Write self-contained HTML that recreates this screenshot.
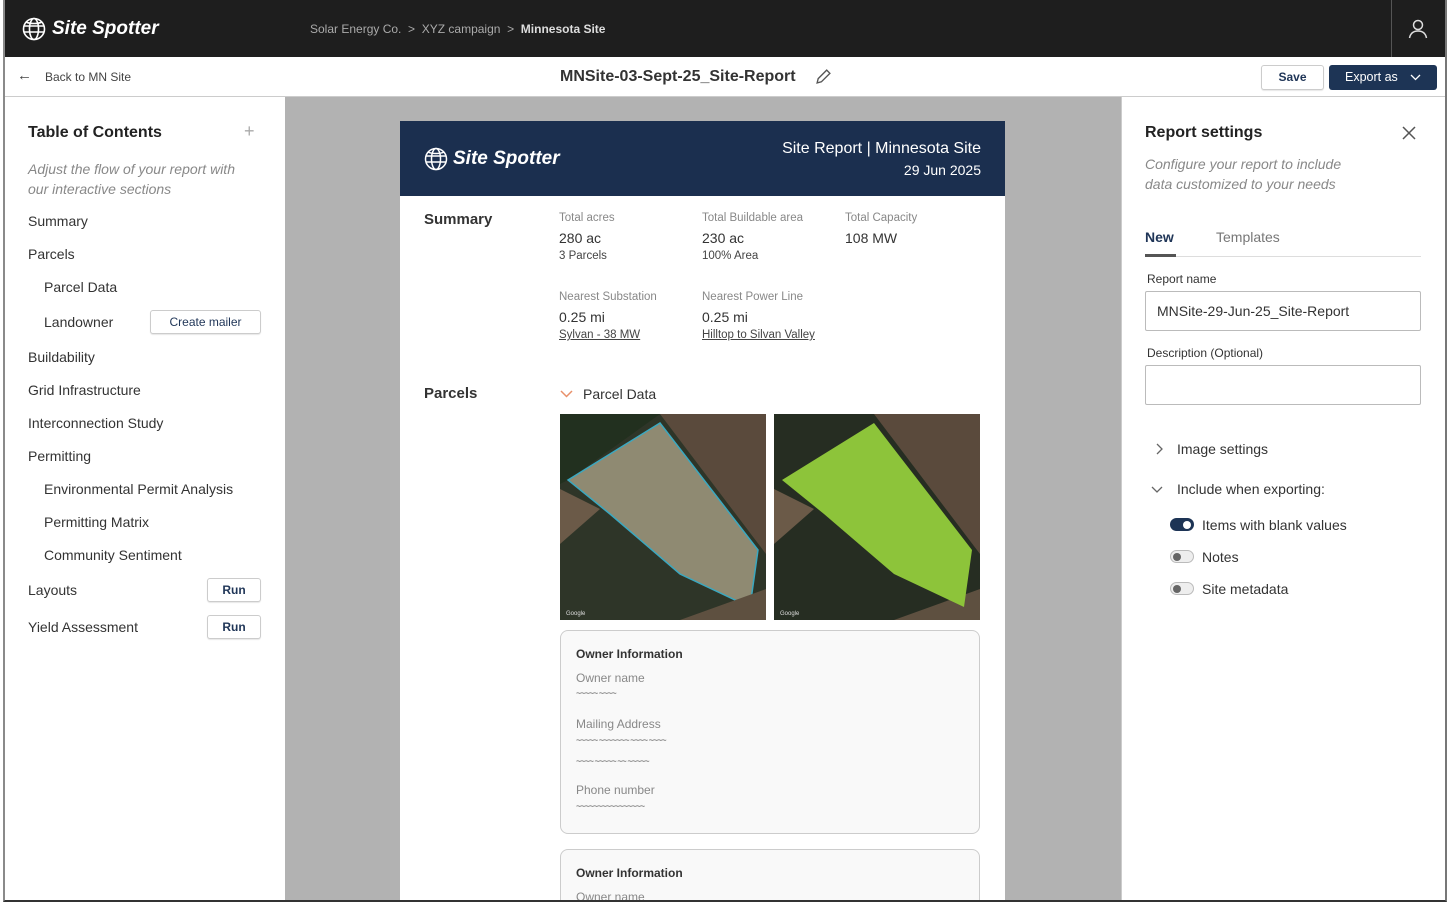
<!DOCTYPE html>
<html><head><meta charset="utf-8"><style>
*{box-sizing:border-box;margin:0;padding:0}
html,body{width:1450px;height:902px;overflow:hidden}
body{background:#fff;font-family:"Liberation Sans",Arial,sans-serif;color:#222;position:relative}
.a{position:absolute}
.frame{left:3px;top:0;width:1444px;height:902px;border-left:2px solid #8a8a8a;border-right:2px solid #777;border-bottom:2px solid #333;overflow:hidden}
.top{left:0;top:0;width:1440px;height:57px;background:#1e1e1e}
.logo{font-style:italic;font-weight:bold;color:#fff}
.sub{left:0;top:57px;width:1440px;height:40px;background:#fff;border-bottom:1px solid #ccc}
.left{left:0;top:97px;width:280px;height:805px;background:#fff}
.canvas{left:280px;top:97px;width:836px;height:805px;background:#b2b2b2;overflow:hidden}
.right{left:1116px;top:97px;width:325px;height:805px;background:#fff;border-left:1px solid #ccc}
.toc{font-size:14px;color:#333}
.btn{border:1px solid #ccc;border-radius:3px;background:#fff;color:#1f3557;font-size:12px;font-weight:bold;text-align:center;box-shadow:0 1px 1px rgba(0,0,0,.1)}
.lbl{font-size:11.5px;color:#888}
.val{font-size:14px;color:#333}
.sm{font-size:11.5px;color:#444}
.card{border:1px solid #ccc;border-radius:8px;background:#f9f9f9}
.squig{font-size:9px;color:#555;letter-spacing:-1px}
.tog{width:24px;height:13px;border-radius:7px;border:1px solid #bbb;background:#eee}
.tog i{position:absolute;left:2px;top:2px;width:8px;height:8px;border-radius:50%;background:#666}
</style></head><body>
<div class="a frame">
 <div class="a top">
  <svg class="a" style="left:17px;top:17px" width="24" height="24" viewBox="0 0 24 24" fill="none" stroke="#fff" stroke-width="1.6"><circle cx="12" cy="12" r="10.5"/><ellipse cx="12" cy="12" rx="4.5" ry="10.5"/><path d="M2 9h20M2 15h20M4 5c4 2 12 2 16 0"/></svg>
  <div class="a logo" style="left:47px;top:18px;font-size:19px">Site Spotter</div>
  <div class="a" style="left:305px;top:22px;font-size:12px;color:#aaa">Solar Energy Co. &nbsp;&gt;&nbsp; XYZ campaign &nbsp;&gt;&nbsp; <b style="color:#ddd">Minnesota Site</b></div>
  <div class="a" style="left:1386px;top:0;width:1px;height:57px;background:#555"></div>
  <svg class="a" style="left:1402px;top:18px" width="22" height="22" viewBox="0 0 22 22" fill="none" stroke="#ddd" stroke-width="1.5"><circle cx="11" cy="7" r="4.5"/><path d="M2.5 20c1-5 4.5-7 8.5-7s7.5 2 8.5 7"/></svg>
 </div>
 <div class="a sub">
  <div class="a" style="left:12px;top:10px;font-size:15px;color:#444">&#8592;</div>
  <div class="a" style="left:40px;top:13px;font-size:12px;color:#444">Back to MN Site</div>
  <div class="a" style="left:555px;top:11px;font-size:16px;font-weight:bold;color:#333">MNSite-03-Sept-25_Site-Report</div>
  <svg class="a" style="left:810px;top:11px" width="17" height="17" viewBox="0 0 16 16" fill="none" stroke="#555" stroke-width="1.3"><path d="M2 14l1-4 8-8 3 3-8 8z"/></svg>
  <div class="a btn" style="left:1256px;top:8px;width:63px;height:25px;line-height:23px">Save</div>
  <div class="a" style="left:1324px;top:8px;width:108px;height:25px;line-height:25px;background:#1d3455;border-radius:3px;color:#fff;font-size:12.5px;padding-left:16px">Export as</div>
  <svg class="a" style="left:1405px;top:16px" width="11" height="8" viewBox="0 0 11 8" fill="none" stroke="#fff" stroke-width="1.3"><path d="M1 2l4.5 4.5L10 2"/></svg>
 </div>
 <div class="a left">
  <div class="a" style="left:23px;top:27px;font-size:16px;font-weight:bold;color:#222">Table of Contents</div>
  <div class="a" style="left:239px;top:24px;font-size:18px;color:#aaa">+</div>
  <div class="a" style="left:23px;top:62px;font-size:14px;font-style:italic;color:#888;line-height:20px">Adjust the flow of your report with<br>our interactive sections</div>
  <div class="a toc" style="left:23px;top:116px">Summary</div>
  <div class="a toc" style="left:23px;top:149px">Parcels</div>
  <div class="a toc" style="left:39px;top:182px">Parcel Data</div>
  <div class="a toc" style="left:39px;top:217px">Landowner</div>
  <div class="a btn" style="left:145px;top:213px;width:111px;height:24px;line-height:22px;font-weight:normal">Create mailer</div>
  <div class="a toc" style="left:23px;top:252px">Buildability</div>
  <div class="a toc" style="left:23px;top:285px">Grid Infrastructure</div>
  <div class="a toc" style="left:23px;top:318px">Interconnection Study</div>
  <div class="a toc" style="left:23px;top:351px">Permitting</div>
  <div class="a toc" style="left:39px;top:384px">Environmental Permit Analysis</div>
  <div class="a toc" style="left:39px;top:417px">Permitting Matrix</div>
  <div class="a toc" style="left:39px;top:450px">Community Sentiment</div>
  <div class="a toc" style="left:23px;top:485px">Layouts</div>
  <div class="a btn" style="left:202px;top:481px;width:54px;height:24px;line-height:22px">Run</div>
  <div class="a toc" style="left:23px;top:522px">Yield Assessment</div>
  <div class="a btn" style="left:202px;top:518px;width:54px;height:24px;line-height:22px">Run</div>
 </div>
 <div class="a canvas">
  <div class="a" style="left:115px;top:24px;width:605px;height:790px;background:#fff;overflow:hidden">
   <div class="a" style="left:0;top:0;width:605px;height:75px;background:#1b2f4f">
    <svg class="a" style="left:24px;top:26px" width="24" height="24" viewBox="0 0 24 24" fill="none" stroke="#fff" stroke-width="1.5"><circle cx="12" cy="12" r="10.5"/><ellipse cx="12" cy="12" rx="4.5" ry="10.5"/><path d="M2 9h20M2 15h20M4 5c4 2 12 2 16 0"/></svg>
    <div class="a logo" style="left:53px;top:27px;font-size:19px">Site Spotter</div>
    <div class="a" style="right:24px;top:19px;font-size:16px;color:#fff">Site Report | Minnesota Site</div>
    <div class="a" style="right:24px;top:41px;font-size:14px;color:#fff">29 Jun 2025</div>
   </div>
   <div class="a" style="left:24px;top:90px;font-size:15px;font-weight:bold;color:#333">Summary</div>
   <div class="a lbl" style="left:159px;top:91px">Total acres</div>
   <div class="a val" style="left:159px;top:109px">280 ac</div>
   <div class="a sm" style="left:159px;top:129px">3 Parcels</div>
   <div class="a lbl" style="left:302px;top:91px">Total Buildable area</div>
   <div class="a val" style="left:302px;top:109px">230 ac</div>
   <div class="a sm" style="left:302px;top:129px">100% Area</div>
   <div class="a lbl" style="left:445px;top:91px">Total Capacity</div>
   <div class="a val" style="left:445px;top:109px">108 MW</div>
   <div class="a lbl" style="left:159px;top:170px">Nearest Substation</div>
   <div class="a val" style="left:159px;top:188px">0.25 mi</div>
   <div class="a sm" style="left:159px;top:208px;text-decoration:underline">Sylvan - 38 MW</div>
   <div class="a lbl" style="left:302px;top:170px">Nearest Power Line</div>
   <div class="a val" style="left:302px;top:188px">0.25 mi</div>
   <div class="a sm" style="left:302px;top:208px;text-decoration:underline">Hilltop to Silvan Valley</div>
   <div class="a" style="left:24px;top:264px;font-size:15px;font-weight:bold;color:#333">Parcels</div>
   <svg class="a" style="left:160px;top:268px" width="13" height="9" viewBox="0 0 13 9" fill="none" stroke="#e8906a" stroke-width="1.5"><path d="M1 2l5.5 5.5L12 2"/></svg>
   <div class="a" style="left:183px;top:265px;font-size:14px;color:#333">Parcel Data</div>
   <svg class="a" style="left:160px;top:293px" width="206" height="206" viewBox="0 0 206 206">
    <rect width="206" height="206" fill="#262d22"/>
    <path d="M100 0H206V206H0V0z" fill="#2e3528"/>
    <path d="M100 0L206 0 206 140z" fill="#5a4a3c"/>
    <path d="M0 0h100L8 66 0 70z" fill="#22301f"/>
    <path d="M0 75L40 95 0 130z" fill="#6b5a48"/>
    <path d="M8 66L100 9 198 136 190 193 120 160 50 100z" fill="#8f8a72"/>
    <path d="M8 66L100 9 198 136 190 193 120 160 50 100z" fill="none" stroke="#3aa8c0" stroke-width="1.5"/>
    <path d="M120 206L206 175 206 206z" fill="#5e5040"/>
    <text x="6" y="201" font-size="6" fill="#ddd" font-family="Liberation Sans">Google</text>
   </svg>
   <svg class="a" style="left:374px;top:293px" width="206" height="206" viewBox="0 0 206 206">
    <rect width="206" height="206" fill="#262d22"/>
    <path d="M100 0L206 0 206 140z" fill="#5a4a3c"/>
    <path d="M0 75L40 95 0 130z" fill="#6b5a48"/>
    <path d="M120 206L206 175 206 206z" fill="#5e5040"/>
    <path d="M8 66L100 9 198 136 190 193 120 160 50 100z" fill="#8dc43a"/>
    <text x="6" y="201" font-size="6" fill="#ddd" font-family="Liberation Sans">Google</text>
   </svg>
   <div class="a card" style="left:160px;top:509px;width:420px;height:204px">
    <div class="a" style="left:15px;top:16px;font-size:12px;font-weight:bold;color:#333">Owner Information</div>
    <div class="a lbl" style="left:15px;top:40px;font-size:12px">Owner name</div>
    <div class="a squig" style="left:15px;top:57px">~~~~~ ~~~~</div>
    <div class="a lbl" style="left:15px;top:86px;font-size:12px">Mailing Address</div>
    <div class="a squig" style="left:15px;top:104px">~~~~~ ~~~~~~~ ~~~~ ~~~~</div>
    <div class="a squig" style="left:15px;top:125px">~~~~ ~~~~~ ~~ ~~~~~</div>
    <div class="a lbl" style="left:15px;top:152px;font-size:12px">Phone number</div>
    <div class="a squig" style="left:15px;top:170px">~~~~~~~~~~~~~~~~</div>
   </div>
   <div class="a card" style="left:160px;top:728px;width:420px;height:120px">
    <div class="a" style="left:15px;top:16px;font-size:12px;font-weight:bold;color:#333">Owner Information</div>
    <div class="a lbl" style="left:15px;top:40px;font-size:12px">Owner name</div>
   </div>
  </div>
 </div>
 <div class="a right">
  <div class="a" style="left:23px;top:27px;font-size:16px;font-weight:bold;color:#222">Report settings</div>
  <svg class="a" style="left:280px;top:29px" width="14" height="14" viewBox="0 0 14 14" stroke="#555" stroke-width="1.5"><path d="M1 1l12 12M13 1L1 13"/></svg>
  <div class="a" style="left:23px;top:57px;font-size:14px;font-style:italic;color:#888;line-height:20px">Configure your report to include<br>data customized to your needs</div>
  <div class="a" style="left:23px;top:132px;font-size:14px;font-weight:bold;color:#1f3557">New</div>
  <div class="a" style="left:94px;top:132px;font-size:14px;color:#777">Templates</div>
  <div class="a" style="left:23px;top:159px;width:276px;height:1px;background:#ddd"></div>
  <div class="a" style="left:23px;top:157px;width:31px;height:3px;background:#555"></div>
  <div class="a" style="left:25px;top:175px;font-size:12px;color:#333">Report name</div>
  <div class="a" style="left:23px;top:194px;width:276px;height:40px;border:1px solid #bbb;border-radius:2px;font-size:14px;color:#333;padding:11px 11px">MNSite-29-Jun-25_Site-Report</div>
  <div class="a" style="left:25px;top:249px;font-size:12px;color:#333">Description (Optional)</div>
  <div class="a" style="left:23px;top:268px;width:276px;height:40px;border:1px solid #bbb;border-radius:2px"></div>
  <svg class="a" style="left:33px;top:346px" width="8" height="12" viewBox="0 0 8 12" fill="none" stroke="#666" stroke-width="1.3"><path d="M2 1l5 5-5 5"/></svg>
  <div class="a" style="left:55px;top:344px;font-size:14px;color:#333">Image settings</div>
  <svg class="a" style="left:29px;top:388px" width="12" height="8" viewBox="0 0 12 8" fill="none" stroke="#666" stroke-width="1.3"><path d="M1 2l5 5 5-5"/></svg>
  <div class="a" style="left:55px;top:384px;font-size:14px;color:#333">Include when exporting:</div>
  <div class="a tog" style="left:48px;top:421px;background:#1d3455;border-color:#1d3455"><i style="left:12px;background:#fff"></i></div>
  <div class="a" style="left:80px;top:420px;font-size:14px;color:#333">Items with blank values</div>
  <div class="a tog" style="left:48px;top:453px"><i></i></div>
  <div class="a" style="left:80px;top:452px;font-size:14px;color:#333">Notes</div>
  <div class="a tog" style="left:48px;top:485px"><i></i></div>
  <div class="a" style="left:80px;top:484px;font-size:14px;color:#333">Site metadata</div>
 </div>
</div>
</body></html>
